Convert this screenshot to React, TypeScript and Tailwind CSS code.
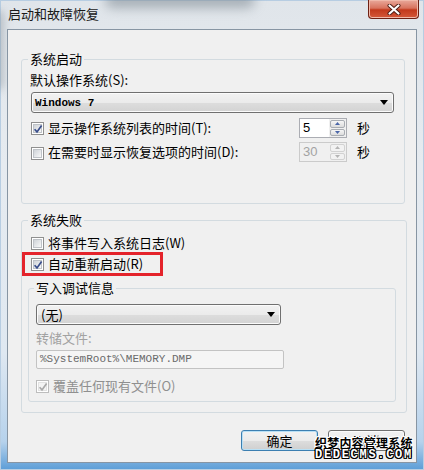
import React from "react";

const F = "font-['Noto_Sans_CJK_SC','Microsoft_YaHei',sans-serif]";
const MONO = "font-['Liberation_Mono','DejaVu_Sans_Mono',monospace]";

function CheckBox({ checked = false, disabled = false }: { checked?: boolean; disabled?: boolean }) {
  return (
    <div
      className={`relative w-[13px] h-[13px] shrink-0 border bg-white p-[1px] ${
        disabled ? "border-[#bdbdbd]" : "border-[#8f8f8f]"
      }`}
    >
      <div
        className={`w-full h-full border ${
          disabled
            ? "bg-[#f4f4f4] border-[#e2e2e2]"
            : "bg-[linear-gradient(135deg,#cfd3d8,#f8f8f8)] border-[#bfc3c8]"
        }`}
      />
      {checked && (
        <svg className="absolute left-[1px] top-[1px]" width="10" height="10" viewBox="0 0 10 10">
          <path
            d="M1.6 5.2 L4 7.9 L8.6 1.4"
            fill="none"
            stroke={disabled ? "#a9a9a9" : "#3a4e8c"}
            strokeWidth="1.7"
          />
        </svg>
      )}
    </div>
  );
}

function SpinBtn({ up, disabled }: { up?: boolean; disabled?: boolean }) {
  return (
    <div
      className={`flex-1 flex items-center justify-center rounded-[2px] border ${
        disabled
          ? "border-[#d2d2d2] bg-[#f2f2f2]"
          : "border-[#a9adb3] bg-[linear-gradient(#f6f6f6,#dcdcdc)]"
      }`}
    >
      <svg width="5" height="3" viewBox="0 0 5 3">
        <path d={up ? "M0 3 H5 L2.5 0 Z" : "M0 0 H5 L2.5 3 Z"} fill={disabled ? "#b4b4b4" : "#4a66a8"} />
      </svg>
    </div>
  );
}

function Spin({ value, disabled }: { value: string; disabled?: boolean }) {
  return (
    <div
      className={`flex w-[48px] h-[20px] border ${
        disabled ? "border-[#cbcbcb] bg-[#f0f0f0]" : "border-[#abadb3] bg-white"
      }`}
    >
      <div
        className={`flex-1 pl-[3px] text-[13px] leading-[18px] font-['Liberation_Sans',Arial,sans-serif] ${
          disabled ? "text-[#a3a3a3]" : "text-black"
        }`}
      >
        {value}
      </div>
      <div className={`w-[17px] flex flex-col gap-[1px] p-[1px] ${disabled ? "bg-[#f0f0f0]" : "bg-[#f0f0f0]"}`}>
        <SpinBtn up disabled={disabled} />
        <SpinBtn disabled={disabled} />
      </div>
    </div>
  );
}

function Combo({ children, className = "" }: { children: React.ReactNode; className?: string }) {
  return (
    <div
      className={`flex items-center justify-between h-[21px] border border-[#707070] rounded-[3px] bg-[linear-gradient(#f2f2f2_0%,#ebebeb_50%,#dddddd_51%,#d3d3d3_100%)] shadow-[inset_0_0_0_1px_#fbfbfb] pr-[5px] ${className}`}
    >
      {children}
      <svg width="8" height="5" viewBox="0 0 8 5">
        <path d="M0 0 H8 L4 5 Z" fill="#000" />
      </svg>
    </div>
  );
}

function Btn({ children, def }: { children: React.ReactNode; def?: boolean }) {
  return (
    <div
      className={`w-[77px] h-[21px] flex items-center justify-center rounded-[3px] border text-[13px] leading-[16px] text-black bg-[linear-gradient(#f2f2f2_0%,#ebebeb_50%,#dddddd_51%,#cfcfcf_100%)] ${
        def
          ? "border-[#3c7fb1] shadow-[inset_0_0_0_1px_#b9e0f5]"
          : "border-[#707070] shadow-[inset_0_0_0_1px_#fbfbfb]"
      }`}
    >
      {children}
    </div>
  );
}

export default function App() {
  return (
    <div
      className={`relative w-[424px] h-[470px] overflow-hidden flex flex-col ${F} text-black bg-[linear-gradient(180deg,#e0e5ea_0%,#e6ebf0_35%,#dfe8f1_75%,#b6d2ec_94%,#5b9dd7_100%)] shadow-[inset_0_0_0_1px_#b7cde2]`}
    >
      {/* blurred desktop behind glass */}
      <div className="absolute left-[105px] top-[-8px] w-[150px] h-[16px] rounded-full bg-[#7f8a93] opacity-60 blur-[6px]" />
      <div className="absolute left-[-6px] top-[10px] w-[10px] h-[80px] rounded-full bg-[#8d979f] opacity-50 blur-[4px]" />

      {/* title bar */}
      <div className="relative h-[29px] shrink-0 flex justify-between">
        <div className="pl-[8px] pt-[5px] text-[13px] leading-[18px] text-[#1a1a1a]">启动和故障恢复</div>
        <div className="mr-[5px] w-[51px] h-[19px] rounded-b-[4px] border border-t-0 border-[#6e2013] bg-[linear-gradient(#e9a99b_0%,#d8735e_45%,#c2391c_55%,#d5593a_100%)] shadow-[inset_0_0_0_1px_#f0b9aa] flex items-center justify-center">
          <svg width="14" height="11" viewBox="0 0 14 11">
            <path d="M2.5 1.5 L11.5 9.5 M11.5 1.5 L2.5 9.5" stroke="#4b1a12" strokeWidth="4" strokeLinecap="round" />
            <path d="M2.5 1.5 L11.5 9.5 M11.5 1.5 L2.5 9.5" stroke="#ffffff" strokeWidth="2.2" strokeLinecap="round" />
          </svg>
        </div>
      </div>

      {/* client area */}
      <div className="relative mx-[7px] h-[434px] shrink-0 border border-[#8795a3] bg-[#f0f0f0] text-[13px] leading-[16px]">
        {/* 系统启动 */}
        <fieldset className="ml-[13px] mt-[21px] w-[384px] border border-[#d3dbe0] rounded-[3px] pl-[8px] pr-[10px] pb-[41px]">
          <legend className="-ml-[2px] px-[2px] leading-[16px]">系统启动</legend>
          <div className="pt-[5px]">默认操作系统(S):</div>
          <Combo className="mt-[4px] ml-[1px] w-[363px] pl-[3px]">
            <span className={`${MONO} text-[11px] font-bold leading-[14px]`}>Windows 7</span>
          </Combo>
          <div className="mt-[5px] flex items-center">
            <div className="w-[269px] flex items-center">
              <div className="ml-[1px]">
                <CheckBox checked />
              </div>
              <span className="ml-[4px]">显示操作系统列表的时间(T):</span>
            </div>
            <Spin value="5" />
            <span className="ml-[10px]">秒</span>
          </div>
          <div className="mt-[4px] flex items-center">
            <div className="w-[269px] flex items-center">
              <div className="ml-[1px] mt-[3px]">
                <CheckBox />
              </div>
              <span className="ml-[4px]">在需要时显示恢复选项的时间(D):</span>
            </div>
            <Spin value="30" disabled />
            <span className="ml-[10px]">秒</span>
          </div>
        </fieldset>

        {/* 系统失败 */}
        <fieldset className="ml-[13px] mt-[8px] w-[384px] border border-[#d3dbe0] rounded-[3px] pl-[8px] pr-[10px] pb-[10px]">
          <legend className="-ml-[2px] px-[2px] leading-[16px]">系统失败</legend>
          <div className="pt-[7px] flex items-center h-[23px]">
            <div className="ml-[1px]">
              <CheckBox />
            </div>
            <span className="ml-[4px]">将事件写入系统日志(W)</span>
          </div>
          <div className="relative mt-[5px] flex items-center h-[16px]">
            <div className="ml-[1px]">
              <CheckBox checked />
            </div>
            <span className="ml-[4px]">自动重新启动(R)</span>
            <div className="absolute -left-[8px] -top-[4px] w-[141px] h-[24px] border-[3px] border-[#e4232b]" />
          </div>

          {/* 写入调试信息 */}
          <fieldset className="mt-[8px] -ml-[2px] w-[368px] border border-[#d3dbe0] rounded-[3px] pl-[7px] pr-[8px] pb-[7px]">
            <legend className="-ml-[2px] px-[2px] leading-[16px]">写入调试信息</legend>
            <Combo className="mt-[8px] w-[245px] pl-[4px]">
              <span className="leading-[16px]">(无)</span>
            </Combo>
            <div className="mt-[5px] text-[#a2a2a2]">转储文件:</div>
            <div
              className={`mt-[4px] w-[248px] h-[19px] border border-[#c3c3c3] rounded-[2px] bg-[#f5f5f5] pl-[3px] ${MONO} text-[11px] leading-[17px] text-[#6a6a6a]`}
            >
              %SystemRoot%\MEMORY.DMP
            </div>
            <div className="mt-[9px] flex items-center h-[16px]">
              <CheckBox checked disabled />
              <span className="ml-[4px] text-[#8f8f8f]">覆盖任何现有文件(O)</span>
            </div>
          </fieldset>
        </fieldset>

        {/* buttons */}
        <div className="mt-[17px] pr-[11px] flex justify-end gap-[10px]">
          <Btn def>确定</Btn>
          <Btn>取消</Btn>
        </div>
      </div>

      {/* watermark */}
      <div className="absolute left-[315px] top-[436px] flex flex-col items-start">
        <div className="text-[12px] leading-[13px] font-bold text-black tracking-[0.2px] [text-shadow:1px_0_0_#fff,-1px_0_0_#fff,0_1px_0_#fff,0_-1px_0_#fff,1px_1px_0_#fff,-1px_-1px_0_#fff,1px_-1px_0_#fff,-1px_1px_0_#fff]">
          织梦内容管理系统
        </div>
        <div
          className={`${MONO} text-[12px] leading-[13px] font-bold text-white tracking-[1.7px] [text-shadow:1px_0_0_#000,-1px_0_0_#000,0_1px_0_#000,0_-1px_0_#000,1px_1px_0_#000,-1px_-1px_0_#000,1px_-1px_0_#000,-1px_1px_0_#000]`}
        >
          DEDECMS.COM
        </div>
      </div>
    </div>
  );
}
